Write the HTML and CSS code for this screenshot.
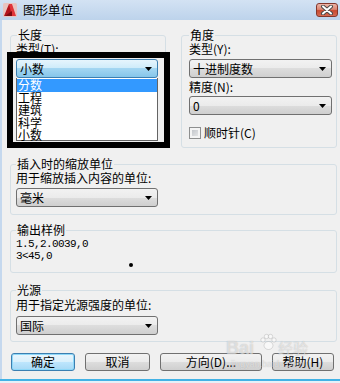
FILE: index.html
```html
<!DOCTYPE html>
<html lang="zh-CN">
<head>
<meta charset="utf-8">
<title>图形单位</title>
<link rel="stylesheet" href="styles.css">
</head>
<body>
<div class="window">
  <div class="titlebar">
    <svg class="app-icon" width="14" height="14" viewBox="0 0 14 14">
      <rect x="0" y="0" width="14" height="14" rx="1.5" fill="#e9c4c0"/>
      <polygon points="1,13 6,1 9,1 9,13" fill="#b3131b"/>
      <polygon points="6,1 9,1 13,13 9,13" fill="#e0353a"/>
      <polygon points="2,13 9,8 9,13" fill="#7d0a10"/>
    </svg>
    <span class="title">图形单位</span>
    <div class="close">
      <svg width="14" height="10" viewBox="0 0 14 10">
        <path d="M3 1.5 L11 8.5 M11 1.5 L3 8.5" stroke="#4a4a4a" stroke-width="4" stroke-linecap="round"/>
        <path d="M3 1.5 L11 8.5 M11 1.5 L3 8.5" stroke="#ffffff" stroke-width="2" stroke-linecap="round"/>
      </svg>
    </div>
  </div>

  <div class="body">
    <div class="toprow">
      <fieldset class="group">
        <legend class="lg-len">长度</legend>
        <div class="gbody gb-len">
          <div class="lbl">类型(T):</div>
          <div class="combo combo-open w142"><span>小数</span><svg class="arrow" width="7" height="4" viewBox="0 0 7 4"><polygon points="0,0 7,0 3.5,4" fill="#000"/></svg></div>
          <ul class="list">
            <li class="sel">分数</li>
            <li>工程</li>
            <li>建筑</li>
            <li>科学</li>
            <li>小数</li>
          </ul>
        </div>
      </fieldset>

      <fieldset class="group">
        <legend class="lg-ang">角度</legend>
        <div class="gbody gb-ang">
          <div class="lbl">类型(Y):</div>
          <div class="combo combo-gap w143"><span>十进制度数</span><svg class="arrow" width="7" height="4" viewBox="0 0 7 4"><polygon points="0,0 7,0 3.5,4" fill="#000"/></svg></div>
          <div class="lbl lbl-gap">精度(N):</div>
          <div class="combo combo-gap2 w143"><span>0</span><svg class="arrow" width="7" height="4" viewBox="0 0 7 4"><polygon points="0,0 7,0 3.5,4" fill="#000"/></svg></div>
          <div class="check-row"><span class="cb"></span><span>顺时针(C)</span></div>
        </div>
      </fieldset>
    </div>

    <fieldset class="group g-insert">
      <legend class="lg-full">插入时的缩放单位</legend>
      <div class="gbody gb-insert">
        <div class="lbl">用于缩放插入内容的单位:</div>
        <div class="combo combo-gap w142"><span>毫米</span><svg class="arrow" width="7" height="4" viewBox="0 0 7 4"><polygon points="0,0 7,0 3.5,4" fill="#000"/></svg></div>
      </div>
    </fieldset>

    <fieldset class="group g-output">
      <legend class="lg-full">输出样例</legend>
      <div class="gbody gb-output">
        <div class="mono">1.5,2.0039,0</div>
        <div class="mono">3&lt;45,0</div>
        <div class="dot"></div>
      </div>
    </fieldset>

    <fieldset class="group g-light">
      <legend class="lg-full">光源</legend>
      <div class="gbody gb-light">
        <div class="lbl">用于指定光源强度的单位:</div>
        <div class="combo combo-gap3 w142"><span>国际</span><svg class="arrow" width="7" height="4" viewBox="0 0 7 4"><polygon points="0,0 7,0 3.5,4" fill="#000"/></svg></div>
      </div>
    </fieldset>

    <div class="buttons">
      <div class="btn btn-default w64">确定</div>
      <div class="btn w65">取消</div>
      <div class="btn w102">方向(D)...</div>
      <div class="btn w62">帮助(H)</div>
    </div>

    <div class="watermark">
      <span class="wm-bai">Bai</span>
      <svg class="wm-paw" width="18" height="18" viewBox="0 0 18 18">
        <circle cx="4" cy="7" r="2.2" fill="rgba(255,255,255,0.5)" stroke="rgba(120,120,120,0.3)" stroke-width="0.8"/>
        <circle cx="7.5" cy="3.5" r="2.2" fill="rgba(255,255,255,0.5)" stroke="rgba(120,120,120,0.3)" stroke-width="0.8"/>
        <circle cx="11.5" cy="3.5" r="2.2" fill="rgba(255,255,255,0.5)" stroke="rgba(120,120,120,0.3)" stroke-width="0.8"/>
        <circle cx="15" cy="7" r="2.2" fill="rgba(255,255,255,0.5)" stroke="rgba(120,120,120,0.3)" stroke-width="0.8"/>
        <ellipse cx="9.5" cy="12.5" rx="4.5" ry="4" fill="rgba(255,255,255,0.5)" stroke="rgba(120,120,120,0.3)" stroke-width="0.8"/>
      </svg>
      <span class="wm-jy">经验</span>
      <span class="wm-url">jingyan.baidu.com</span>
    </div>
  </div>

  <div class="footer-line"></div>
  <div class="annot"></div>
</div>
</body>
</html>
```

FILE: styles.css
```css
* {
  box-sizing: border-box;
  margin: 0;
  padding: 0;
}

html, body {
  width: 340px;
  height: 383px;
  overflow: hidden;
}

body {
  font-family: "Noto Sans CJK SC", "Noto Sans", sans-serif;
  font-size: 12px;
  color: #000;
  background: #f0f0f0;
}

.window {
  width: 340px;
  height: 383px;
  display: flex;
  flex-direction: column;
  position: relative;
}

/* Title bar */
.titlebar {
  height: 20px;
  flex: none;
  display: flex;
  align-items: flex-start;
  padding: 3px 2px 0 3px;
  background: linear-gradient(#d3e2f3, #bdd3eb);
}

.app-icon {
  flex: none;
}

.title {
  margin-left: 6px;
  font-size: 12.5px;
  line-height: 14px;
}

.close {
  margin-left: auto;
  width: 22px;
  height: 14px;
  border: 1px solid #84372c;
  border-radius: 3px;
  background: linear-gradient(#ecb5a8, #dc8571 45%, #c84a30 55%, #d56b52);
  display: flex;
  align-items: center;
  justify-content: center;
}

/* Body */
.body {
  flex: 1;
  position: relative;
  background: #f0f0f0;
  border-left: 2px solid #c5d8ee;
  padding: 8px 3px 0 8px;
  display: flex;
  flex-direction: column;
}

.footer-line {
  flex: none;
  height: 4px;
  border-top: 2px solid #42b2e5;
  background: #e6f0f8;
}

/* Group boxes */
.toprow {
  display: grid;
  grid-template-columns: 156px 156px;
  column-gap: 15px;
}

fieldset.group {
  border: 1px solid #d5dfe5;
  border-radius: 3px;
  min-width: 0;
  padding: 0;
}

legend {
  font-size: 12px;
  line-height: 14px;
  padding: 0 1px;
}

.lg-len { margin-left: 6px; }
.lg-ang { margin-left: 7px; }
.lg-full { margin-left: 5px; }

.gb-len { padding: 0 7px 6px 5px; }
.gb-ang { padding: 0 4px 7px 7px; }

.g-insert { margin-top: 9px; }
.gb-insert { padding: 0 5px 7px 5px; }

.g-output { margin-top: 8px; }
.gb-output { padding: 1px 5px 5px 5px; }

.g-light { margin-top: 10px; }
.gb-light { padding: 1px 5px 6px 5px; }

.lbl {
  line-height: 14px;
  white-space: nowrap;
}

.lbl-gap { margin-top: 2px; }

/* Combo boxes */
.combo {
  height: 19px;
  margin-top: 3px;
  border: 1px solid #707070;
  border-radius: 3px;
  background: linear-gradient(#f2f2f2, #ebebeb 50%, #dddddd 50%, #cfcfcf);
  display: flex;
  align-items: center;
  padding: 0 5px 0 3px;
  line-height: 14px;
  white-space: nowrap;
}

.combo-gap2 { margin-top: 2px; }
.combo-gap3 { margin-top: 4px; }

.combo .arrow {
  margin-left: auto;
  flex: none;
}

.combo-open {
  border-color: #3c7fb1;
  background: linear-gradient(#e6f5fd, #cdebfa 50%, #a3d6f2 50%, #86c6ea);
}

.w142 { width: 142px; }
.w143 { width: 143px; }

/* Drop-down list */
.list {
  list-style: none;
  width: 142px;
  height: 63px;
  border: 1px solid #646464;
  border-top: none;
  background: #fff;
  padding-top: 1px;
}

.list li {
  height: 12.5px;
  line-height: 12.5px;
  font-size: 12px;
  padding-left: 1px;
  white-space: nowrap;
}

.list li.sel {
  background: #3399ff;
  color: #fff;
}

/* Checkbox */
.check-row {
  margin-top: 11px;
  height: 14px;
  display: flex;
  align-items: center;
  line-height: 14px;
}

.cb {
  width: 12px;
  height: 12px;
  margin-right: 3px;
  border: 1px solid #8e8f8f;
  background: linear-gradient(135deg, #b9bdc3, #eeeeee);
  box-shadow: inset 0 0 0 2px #f4f4f4;
}

/* Output sample */
.mono {
  font-family: "Liberation Mono", "DejaVu Sans Mono", monospace;
  font-size: 11px;
  letter-spacing: -0.6px;
  line-height: 12px;
  white-space: nowrap;
}

.dot {
  width: 4px;
  height: 4px;
  border-radius: 50%;
  background: #000;
  margin: 1px 0 0 113px;
}

/* Buttons */
.buttons {
  display: flex;
  gap: 10px;
  margin-top: 11px;
  padding-left: 1px;
}

.btn {
  height: 18px;
  border: 1px solid #707070;
  border-radius: 3px;
  background: linear-gradient(#f2f2f2, #ebebeb 50%, #dddddd 50%, #cfcfcf);
  display: flex;
  align-items: center;
  justify-content: center;
  line-height: 14px;
  white-space: nowrap;
}

.btn-default {
  border-color: #3c7fb1;
  background: linear-gradient(#eaf6fd, #d9f0fc 50%, #bee6fd 50%, #a7d9f5);
  box-shadow: inset 0 0 0 1px #8fd8f8;
}

.w64 { width: 64px; }
.w65 { width: 65px; }
.w102 { width: 102px; }
.w62 { width: 62px; }

/* Watermark overlay */
.watermark {
  position: absolute;
  left: 224px;
  top: 310px;
  width: 100px;
  height: 44px;
  pointer-events: none;
  color: rgba(255, 255, 255, 0.55);
  text-shadow: 0 0 1px rgba(90, 90, 90, 0.4);
}

.wm-bai {
  position: absolute;
  left: 0;
  top: 8px;
  font-family: "Liberation Sans", sans-serif;
  font-size: 18px;
  font-weight: bold;
  line-height: 20px;
}

.wm-paw {
  position: absolute;
  left: 33px;
  top: 3px;
}

.wm-jy {
  position: absolute;
  left: 52px;
  top: 9px;
  font-size: 15px;
  line-height: 18px;
}

.wm-url {
  position: absolute;
  left: 5px;
  top: 29px;
  font-family: "Liberation Sans", sans-serif;
  font-size: 9px;
  line-height: 11px;
}

/* Black annotation rectangle drawn over the screenshot */
.annot {
  position: absolute;
  left: 7px;
  top: 52px;
  width: 163px;
  height: 96px;
  border: 6px solid #000;
  pointer-events: none;
}
```
